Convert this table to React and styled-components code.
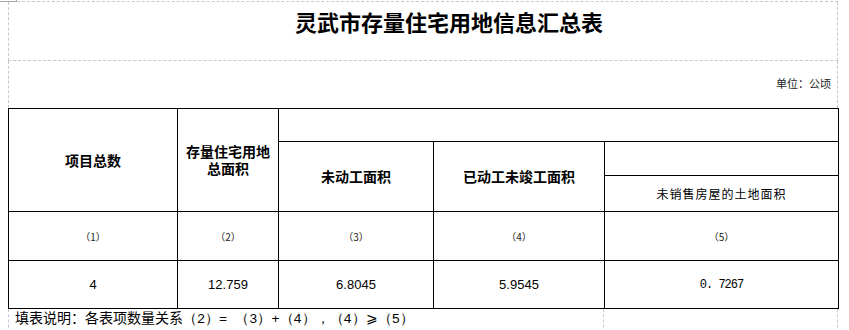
import React from 'react';
import styled, { createGlobalStyle } from 'styled-components';

const GlobalStyle = createGlobalStyle`
  html, body {
    margin: 0;
    padding: 0;
    background: #fff;
  }
  body {
    font-family: "Noto Sans CJK SC", "Liberation Sans", sans-serif;
    color: #000;
  }
`;

const TopEdge = styled.div`
  display: flex;
  width: 838px;
  height: 2px;
`;

const CornerMark = styled.div`
  width: 16px;
  height: 1px;
  border-bottom: 1px solid #a8a8a8;
  border-right: 1px solid #a8a8a8;
`;

const EdgeRule = styled.div`
  flex: 1;
  height: 1px;
  border-bottom: 1px dashed #c8c8c8;
`;

const Sheet = styled.div`
  margin-left: 8px;
  width: 830px;
  display: flex;
  flex-direction: column;
`;

const TitleRow = styled.div`
  height: 58px;
  box-sizing: content-box;
  border-left: 1px dashed #c8c8c8;
  border-right: 1px dashed #c8c8c8;
  border-bottom: 1px dashed #c8c8c8;
  padding-left: 52px;
  text-align: center;
`;

const Title = styled.h1`
  margin: 0;
  padding-top: 4px;
  font-size: 22px;
  line-height: 30px;
  font-weight: 700;
  font-family: "Noto Sans CJK SC", sans-serif;
`;

const UnitRow = styled.div`
  height: 47px;
  box-sizing: border-box;
  border-left: 1px dashed #c8c8c8;
  border-right: 1px dashed #c8c8c8;
  display: flex;
  justify-content: flex-end;
  padding: 14px 6px 0 0;
`;

const Unit = styled.span`
  font-size: 11px;
  line-height: 16px;
  color: #222;
`;

const Table = styled.table`
  width: 830px;
  border-collapse: collapse;
  table-layout: fixed;
`;

const Row = styled.tr`
  height: ${p => p.$h}px;
`;

const Cell = styled.td`
  border: 1px solid #000;
  padding: 0;
  text-align: center;
  vertical-align: middle;
  font-size: 14px;
  line-height: 17px;
  font-weight: ${p => (p.$bold ? 700 : 400)};
  letter-spacing: ${p => (p.$spaced ? '1px' : '0')};
  ${p => p.$small && 'font-size: 12px;'}
`;

const Index = styled.td`
  border: 1px solid #000;
  padding: 0;
  text-align: center;
  font-size: 10px;
  color: #222;
`;

const Value = styled.td`
  border: 1px solid #000;
  padding: 0;
  text-align: center;
  font-family: ${p => (p.$mono ? '"Liberation Mono", monospace' : '"Liberation Sans", sans-serif')};
  font-size: ${p => (p.$mono ? '12px' : '13px')};
  letter-spacing: ${p => (p.$mono ? '-1px' : '0')};
`;

const FootRow = styled.div`
  display: grid;
  grid-template-columns: 596px 1fr;
  height: 24px;
`;

const FootCell = styled.div`
  border-right: 1px dashed #c8c8c8;
  ${p => p.$first && 'border-left: 1px dashed #c8c8c8;'}
  padding-left: 6px;
  white-space: nowrap;
  font-size: 14px;
  line-height: 16px;
`;

const Formula = styled.span`
  font-family: "Liberation Mono", "DejaVu Sans Mono", monospace;
  font-size: 13.5px;
`;

const widths = [169, 101, 155, 171, 234];
const values = [
  { v: '4' },
  { v: '12.759' },
  { v: '6.8045' },
  { v: '5.9545' },
  { v: '0. 7267', mono: true },
];

export default function App() {
  return (
    <>
      <GlobalStyle />
      <TopEdge>
        <CornerMark />
        <EdgeRule />
      </TopEdge>
      <Sheet>
        <TitleRow>
          <Title>灵武市存量住宅用地信息汇总表</Title>
        </TitleRow>
        <UnitRow>
          <Unit>单位：公顷</Unit>
        </UnitRow>
        <Table>
          <colgroup>
            {widths.map((w, i) => <col key={i} style={{ width: w }} />)}
          </colgroup>
          <tbody>
            <Row $h={33}>
              <Cell $bold rowSpan={3}>项目总数</Cell>
              <Cell $bold rowSpan={3}>存量住宅用地<br />总面积</Cell>
              <Cell colSpan={3} />
            </Row>
            <Row $h={34}>
              <Cell $bold rowSpan={2}>未动工面积</Cell>
              <Cell $bold rowSpan={2}>已动工未竣工面积</Cell>
              <Cell />
            </Row>
            <Row $h={36}>
              <Cell $small $spaced>未销售房屋的土地面积</Cell>
            </Row>
            <Row $h={49}>
              {[1, 2, 3, 4, 5].map(n => <Index key={n}>（{n}）</Index>)}
            </Row>
            <Row $h={48}>
              {values.map((d, i) => <Value key={i} $mono={d.mono}>{d.v}</Value>)}
            </Row>
          </tbody>
        </Table>
        <FootRow>
          <FootCell $first>
            填表说明：各表项数量关系<Formula>（2）= （3）+（4），（4）⩾（5）</Formula>
          </FootCell>
          <FootCell />
        </FootRow>
      </Sheet>
    </>
  );
}
